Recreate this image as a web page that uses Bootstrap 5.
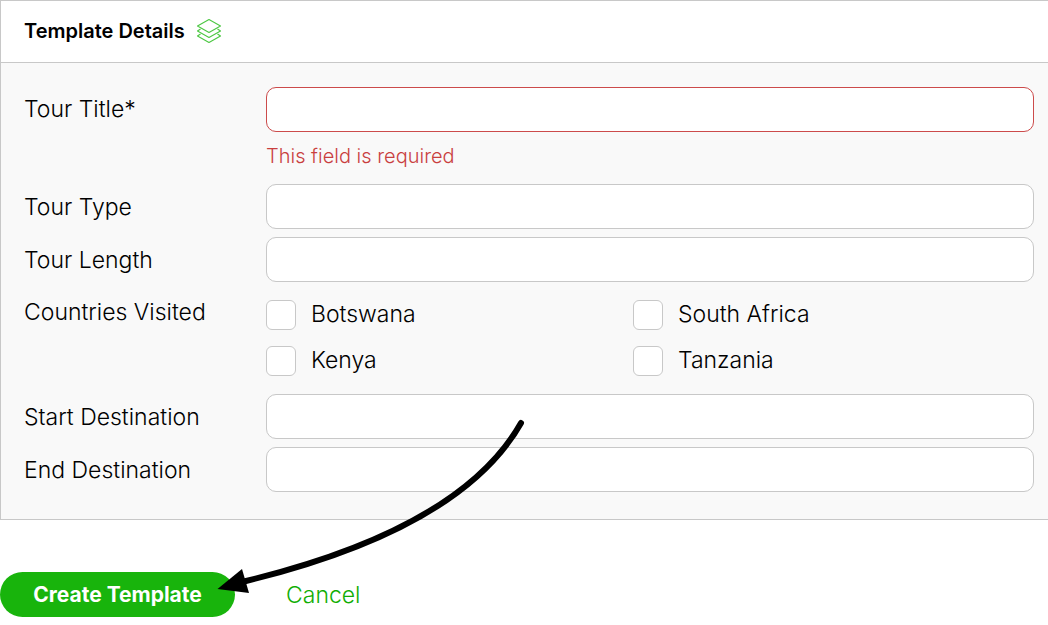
<!DOCTYPE html>
<html lang="en">
<head>
<meta charset="utf-8">
<meta name="viewport" content="width=device-width, initial-scale=1">
<title>Template Details</title>
<link href="https://cdn.jsdelivr.net/npm/bootstrap@5.3.0/dist/css/bootstrap.min.css" rel="stylesheet">
<style>
  body { font-family: Inter, "Liberation Sans", sans-serif; font-size: 23px; font-weight: 300; line-height: 30px; color: #000; background: #fff; }
  .panel { border: 1px solid #c8c8c8; border-right: 0; background: #f9f9f9; }
  .panel-head { padding: 15px 23px 17px; gap: 11px; height: 62px; border-bottom: 1px solid #c8c8c8; background: #fff; }
  .panel-head h1 { font-size: 20px; line-height: 30px; font-weight: 600; }
  .panel-body { padding: 24px 14px 27px 23px; gap: 8px; }
  .field { display: grid; grid-template-columns: 242px 1fr; }
  .field-name { padding-top: 8px; }
  .field-name.raised { padding-top: 7px; }
  .form-control { height: 45px; border-color: #c8c8c8; border-radius: 10px; font-size: 23px; }
  .form-control.is-invalid { border-color: #cc4b4b; background-image: none; }
  .error-text { color: #c93f3f; font-size: 20px; line-height: 30px; padding: 9px 0 5px; }
  .choices { display: grid; grid-template-columns: 1fr 1fr; row-gap: 16px; padding: 10px 34px 10px 0; }
  .choice { gap: 15px; }
  .choice label { line-height: 28px; }
  .choice .form-check-input { width: 30px; height: 30px; margin: 0; border-color: #c8c8c8; border-radius: 6px; }
  .actions { padding-top: 52px; gap: 51px; }
  .btn-create { --bs-btn-bg: #18b40c; --bs-btn-color: #fff; --bs-btn-hover-bg: #129508; --bs-btn-hover-color: #fff; width: 235px; height: 45px; padding: 0; border: 0; font-size: 21px; line-height: 30px; font-weight: 700; }
  .cancel-link { color: #10ae04; }
  .pointer-arrow { left: 210px; top: 410px; pointer-events: none; }
</style>
</head>
<body>
<main class="position-relative">
  <form novalidate>
    <section class="panel">
      <header class="panel-head d-flex align-items-center">
        <h1 class="m-0">Template Details</h1>
        <svg width="26" height="26" viewBox="0 0 26 26" fill="none" stroke="#4cc742" stroke-width="1.1" stroke-linejoin="round" aria-hidden="true">
          <path d="M13 1.500L24.500 8L13 14.500L1.500 8Z"/>
          <path d="M4.500 11L1.500 13L13 19.500L24.500 13L21.500 11"/>
          <path d="M4.500 16L1.500 18L13 24.500L24.500 18L21.500 16"/>
        </svg>
      </header>
      <div class="panel-body d-flex flex-column">
        <div class="field">
          <label class="field-name raised" for="title">Tour Title*</label>
          <div>
            <input class="form-control is-invalid" id="title" type="text" aria-describedby="title-error">
            <div class="error-text" id="title-error">This field is required</div>
          </div>
        </div>
        <div class="field">
          <label class="field-name" for="type">Tour Type</label>
          <input class="form-control" id="type" type="text">
        </div>
        <div class="field">
          <label class="field-name" for="length">Tour Length</label>
          <input class="form-control" id="length" type="text">
        </div>
        <div class="field" role="group" aria-labelledby="countries">
          <div class="field-name raised" id="countries">Countries Visited</div>
          <div class="choices">
            <div class="choice d-flex"><input class="form-check-input" type="checkbox" id="botswana"><label for="botswana">Botswana</label></div>
            <div class="choice d-flex"><input class="form-check-input" type="checkbox" id="safrica"><label for="safrica">South Africa</label></div>
            <div class="choice d-flex"><input class="form-check-input" type="checkbox" id="kenya"><label for="kenya">Kenya</label></div>
            <div class="choice d-flex"><input class="form-check-input" type="checkbox" id="tanzania"><label for="tanzania">Tanzania</label></div>
          </div>
        </div>
        <div class="field">
          <label class="field-name" for="start">Start Destination</label>
          <input class="form-control" id="start" type="text">
        </div>
        <div class="field">
          <label class="field-name" for="end">End Destination</label>
          <input class="form-control" id="end" type="text">
        </div>
      </div>
    </section>
    <div class="actions d-flex align-items-center">
      <button class="btn btn-create rounded-pill" type="submit">Create Template</button>
      <a class="cancel-link text-decoration-none" href="#">Cancel</a>
    </div>
  </form>
  <svg class="pointer-arrow position-absolute" width="320" height="190" viewBox="210 410 320 190" aria-hidden="true">
    <path d="M521 423Q461 529 244 581.500" fill="none" stroke="#000" stroke-width="6" stroke-linecap="round"/>
    <path d="M217.500 589L242 569L249 593Z"/>
  </svg>
</main>
<script src="https://cdn.jsdelivr.net/npm/bootstrap@5.3.0/dist/js/bootstrap.bundle.min.js"></script>
</body>
</html>
